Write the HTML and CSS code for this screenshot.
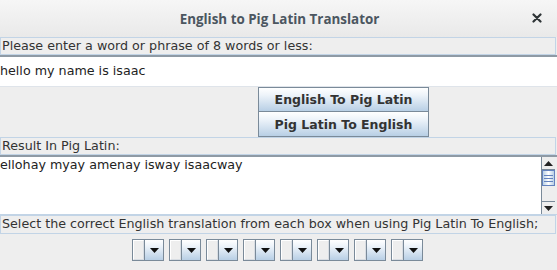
FILE: index.html
```html
<!DOCTYPE html>
<html>
<head>
<meta charset="utf-8">
<link rel="stylesheet" href="styles.css">
</head>
<body>
<div class="window">
  <div class="titlebar">
    <span class="title">English to Pig Latin Translator</span>
    <svg class="close" width="10" height="10" viewBox="0 0 10 10"><path d="M1.5 1.5 L8.5 8.5 M8.5 1.5 L1.5 8.5" stroke="#2e3436" stroke-width="2.2" stroke-linecap="round"/></svg>
  </div>
  <div class="label">Please enter a word or phrase of 8 words or less:</div>
  <div class="textfield">hello my name is isaac</div>
  <div class="buttons">
    <div class="btn">English To Pig Latin</div>
    <div class="btn">Pig Latin To English</div>
  </div>
  <div class="label label2">Result In Pig Latin:</div>
  <div class="textarea">
    <div class="areatext">ellohay myay amenay isway isaacway</div>
    <div class="scrollbar">
      <div class="sb-btn"><svg width="9" height="5" viewBox="0 0 9 5"><path d="M0 5 L4.5 0 L9 5 Z" fill="#222"/></svg></div>
      <div class="sb-thumb"><span></span><span></span><span></span></div>
      <div class="sb-track"></div>
      <div class="sb-btn"><svg width="9" height="5" viewBox="0 0 9 5"><path d="M0 0 L4.5 5 L9 0 Z" fill="#222"/></svg></div>
    </div>
  </div>
  <div class="label label3">Select the correct English translation from each box when using Pig Latin To English;</div>
  <div class="combos">
    <div class="combo"><div class="cfield"></div><div class="carrow"><svg width="9" height="5" viewBox="0 0 9 5"><path d="M0 0 L4.5 5 L9 0 Z" fill="#111"/></svg></div></div>
    <div class="combo"><div class="cfield"></div><div class="carrow"><svg width="9" height="5" viewBox="0 0 9 5"><path d="M0 0 L4.5 5 L9 0 Z" fill="#111"/></svg></div></div>
    <div class="combo"><div class="cfield"></div><div class="carrow"><svg width="9" height="5" viewBox="0 0 9 5"><path d="M0 0 L4.5 5 L9 0 Z" fill="#111"/></svg></div></div>
    <div class="combo"><div class="cfield"></div><div class="carrow"><svg width="9" height="5" viewBox="0 0 9 5"><path d="M0 0 L4.5 5 L9 0 Z" fill="#111"/></svg></div></div>
    <div class="combo"><div class="cfield"></div><div class="carrow"><svg width="9" height="5" viewBox="0 0 9 5"><path d="M0 0 L4.5 5 L9 0 Z" fill="#111"/></svg></div></div>
    <div class="combo"><div class="cfield"></div><div class="carrow"><svg width="9" height="5" viewBox="0 0 9 5"><path d="M0 0 L4.5 5 L9 0 Z" fill="#111"/></svg></div></div>
    <div class="combo"><div class="cfield"></div><div class="carrow"><svg width="9" height="5" viewBox="0 0 9 5"><path d="M0 0 L4.5 5 L9 0 Z" fill="#111"/></svg></div></div>
    <div class="combo"><div class="cfield"></div><div class="carrow"><svg width="9" height="5" viewBox="0 0 9 5"><path d="M0 0 L4.5 5 L9 0 Z" fill="#111"/></svg></div></div>
  </div>
</div>
</body>
</html>
```
FILE: styles.css
```css
html, body {
  margin: 0;
  padding: 0;
  background: #eeeeee;
}
.window {
  width: 557px;
  height: 270px;
  overflow: hidden;
  font-family: "DejaVu Sans", sans-serif;
  font-size: 12.7px;
  color: #333;
}
.titlebar {
  height: 37px;
  box-sizing: border-box;
  background: linear-gradient(#f6f6f6, #e9e9e9);
  display: flex;
  align-items: center;
  justify-content: center;
  position: relative;
}
.title {
  font-family: "Open Sans", sans-serif;
  font-weight: bold;
  font-size: 13.4px;
  color: #4b5660;
  padding-left: 2px;
}
.close {
  position: absolute;
  right: 15px;
  top: 13px;
}
.label {
  width: 556px;
  height: 18px;
  box-sizing: border-box;
  border: 1px solid #c2d4e6;
  padding-left: 1px;
  line-height: 16px;
  color: #333;
  white-space: nowrap;
  overflow: hidden;
}
.textfield {
  height: 32px;
  box-sizing: border-box;
  background: #fff;
  border-top: 2px solid #8e9aa5;
  border-bottom: 1px solid #dfe4ea;
  padding-left: 0;
  line-height: 27px;
  color: #222;
}
.buttons {
  height: 50px;
  display: flex;
  flex-direction: column;
  align-items: flex-start;
  padding-left: 258px;
}
.btn {
  width: 171px;
  height: 25px;
  box-sizing: border-box;
  border: 1px solid #7a8a99;
  background: linear-gradient(#ffffff 0%, #eef4fa 30%, #b8cfe5 100%);
  font-weight: bold;
  font-size: 12.5px;
  color: #333;
  display: flex;
  align-items: center;
  justify-content: center;
}
.btn + .btn {
  border-top: none;
  height: 25px;
}
.textarea {
  height: 60px;
  box-sizing: border-box;
  border-top: 2px solid #8e9aa5;
  border-bottom: 1px solid #c2d4e6;
  display: flex;
  padding-right: 2px;
}
.areatext {
  flex: 1;
  background: #fff;
  line-height: 15px;
  color: #222;
}
.scrollbar {
  width: 14px;
  box-sizing: border-box;
  background: #eeeeee;
  border-left: 1px solid #7a8a99;
  display: flex;
  flex-direction: column;
}
.sb-btn {
  height: 13px;
  box-sizing: border-box;
  border-bottom: 1px solid #7a8a99;
  background: #eeeeee;
  display: flex;
  align-items: center;
  justify-content: center;
}
.sb-btn:last-child {
  border-bottom: none;
  border-top: 1px solid #7a8a99;
}
.sb-thumb {
  height: 16px;
  box-sizing: border-box;
  border: 1px solid #6382bf;
  background: linear-gradient(90deg, #b8cfe5, #ffffff 50%, #b8cfe5);
  display: flex;
  flex-direction: column;
  align-items: center;
  justify-content: center;
  gap: 2px;
}
.sb-thumb span {
  width: 9px;
  height: 1px;
  background: #6382bf;
}
.sb-track {
  flex: 1;
}
.label3 {
  height: 19px;
}
.combos {
  display: flex;
  justify-content: center;
  gap: 5px;
  padding-top: 5px;
  padding-right: 2px;
}
.combo {
  width: 32px;
  height: 22px;
  box-sizing: border-box;
  border: 1px solid #7a8a99;
  display: flex;
}
.cfield {
  width: 11px;
  box-sizing: border-box;
  background: #eeeeee;
  border: 1px solid #ffffff;
  border-right-color: #d8dde3;
  border-bottom-color: #d8dde3;
}
.carrow {
  flex: 1;
  border-left: 1px solid #7a8a99;
  background: linear-gradient(#ffffff 0%, #eef4fa 30%, #b8cfe5 100%);
  display: flex;
  align-items: center;
  justify-content: center;
}
```
